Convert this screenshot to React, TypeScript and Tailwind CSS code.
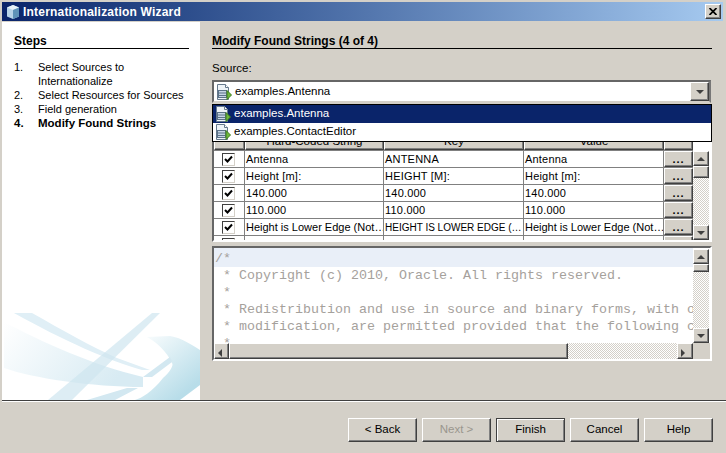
import React from "react";

const ui = { fontFamily: '"Liberation Sans", Arial, sans-serif' };

const FileIcon = () => (
  <svg width="16" height="16" viewBox="0 0 16 16" className="shrink-0">
    <path d="M1.5 0.5h8l3 3v12h-11z" fill="#eef3f7" stroke="#66798c" />
    <path d="M9.5 0.5v3h3" fill="#fff" stroke="#66798c" />
    <rect x="2.5" y="6.5" width="8" height="7" fill="#c7d5e4" stroke="#5b7288" />
    <path d="M3 9h7M3 11.5h7" stroke="#5b7288" />
    <path d="M11 6.5l4.5 4.5-4.5 4.5z" fill="#6cb83c" stroke="#3f7d1e" />
  </svg>
);

const Arrow = ({ dir }: { dir: "up" | "down" | "left" | "right" }) => {
  const pts = {
    up: "1,5 9,5 5,1",
    down: "1,1 9,1 5,5",
    left: "5,1 5,9 1,5",
    right: "1,1 1,9 5,5",
  }[dir];
  return (
    <svg width="10" height="10" viewBox="0 0 10 6" className="overflow-visible">
      <polygon points={pts} fill="#404040" />
    </svg>
  );
};

const raised =
  "border border-t-white border-l-white border-r-[#404040] border-b-[#404040] bg-[#d4d0c8] shadow-[inset_-1px_-1px_0_#808080]";
const checker =
  "bg-[repeating-conic-gradient(#d4d0c8_0_25%,#ffffff_0_50%)] bg-[length:2px_2px]";

const ScrollButton = ({ dir, className }: { dir: "up" | "down" | "left" | "right"; className: string }) => (
  <div className={`${raised} flex items-center justify-center ${className}`}>
    <Arrow dir={dir} />
  </div>
);

const rows = [
  ["Antenna", "ANTENNA", "Antenna"],
  ["Height [m]:", "HEIGHT [M]:", "Height [m]:"],
  ["140.000", "140.000", "140.000"],
  ["110.000", "110.000", "110.000"],
  ["Height is Lower Edge (Not…", "HEIGHT IS LOWER EDGE (…", "Height is Lower Edge (Not…"],
  ["", "", ""],
];

const cols = "grid grid-cols-[31px_139px_140px_140px_29px] grid-rows-[16px]";

const cellSize = (c: string) => {
  if (c.startsWith("HEIGHT IS")) return "text-[10px]";
  if (c.startsWith("Height is")) return "text-[11px]";
  return "text-[11px] tracking-[0.2px]";
};

const Row = ({ cells }: { cells: string[] }) => (
  <div className={`${cols} h-[17px] border-b border-[#808080] leading-[17px] text-black`}>
    <div className="flex items-center justify-center border-r border-[#808080] pr-[1px]">
      <div className="flex h-[13px] w-[13px] items-center justify-center border border-t-[#404040] border-l-[#404040] border-r-[#d4d0c8] border-b-[#d4d0c8] bg-white">
        <svg width="9" height="9" viewBox="0 0 9 9">
          <path d="M1 4l2.5 2.5L8 1.5" fill="none" stroke="#000" strokeWidth="2" />
        </svg>
      </div>
    </div>
    {cells.map((c, i) => (
      <div key={i} className={`overflow-hidden whitespace-nowrap border-r border-[#808080] pl-[1px] ${cellSize(c)}`}>
        {c}
      </div>
    ))}
    <div className={`${raised} text-center text-[11px] font-bold leading-[14px] tracking-[1px]`}>
      {cells[0] ? "..." : ""}
    </div>
  </div>
);

const Option = ({ label, active }: { label: string; active?: boolean }) => (
  <div className={`flex h-[18px] items-center gap-[3px] pl-[2px] text-[11.5px] ${active ? "bg-[#0a246a] text-white" : "bg-white text-black"}`}>
    <FileIcon />
    {label}
  </div>
);

const code = [
  "/*",
  " * Copyright (c) 2010, Oracle. All rights reserved.",
  " *",
  " * Redistribution and use in source and binary forms, with or without",
  " * modification, are permitted provided that the following conditions",
  " *",
];

const Swoosh = () => (
  <svg width="198" height="110" viewBox="0 0 198 110" className="mt-auto block shrink-0">
    <defs>
      <linearGradient id="sw1" x1="0" y1="0" x2="1" y2="0.4">
        <stop offset="0" stopColor="#ffffff" />
        <stop offset="1" stopColor="#d8ebf3" />
      </linearGradient>
      <linearGradient id="sw2" x1="0" y1="0" x2="0.75" y2="0.9">
        <stop offset="0" stopColor="#ffffff" />
        <stop offset="1" stopColor="#b8dde9" />
      </linearGradient>
    </defs>
    <path d="M12 23H30C60 40 90 57 115 68L148 80H140C110 72 60 50 12 23z" fill="#e0eff6" />
    <path d="M2 32C40 52 90 75 141 87V97C90 97 30 88 2 78z" fill="url(#sw1)" />
    <path d="M150 23H158L70 110H46z" fill="#cfe5ef" fillOpacity="0.7" />
    <path d="M145 47L168 46C180 48 190 55 198 60V95L178 110H133C140 108 150 102 161 88C168 82 172 75 170 73C168 68 160 55 145 47z" fill="url(#sw2)" />
    <path d="M85 110L125 98H136L113 110zM141 87L168 67L170 72L150 87z" fill="#d3e8f1" />
  </svg>
);

export default function App() {
  return (
    <div style={ui} className="h-[453px] w-[726px] overflow-hidden bg-[#d4d0c8] pt-[2px] pl-[2px] text-[11.5px] text-black">
      <div className="flex h-[19px] w-[721px] items-center bg-gradient-to-r from-[#0a246a] to-[#a6caf0] pl-[3px] pr-[2px]">
        <svg width="16" height="16" viewBox="0 0 16 16" className="shrink-0">
          <path d="M8 1l6 2.5v9L8 15l-6-2.5v-9z" fill="#b8d4e8" />
          <path d="M8 1l6 2.5L8 6 2 3.5z" fill="#e8f2f8" />
          <path d="M8 6l6-2.5v9L8 15z" fill="#5f93b8" />
        </svg>
        <span className="ml-[2px] text-[12px] font-bold tracking-[0.2px] text-white">Internationalization Wizard</span>
        <div className={`${raised} ml-auto flex h-[15px] w-[16px] items-center justify-center`}>
          <svg width="8" height="7" viewBox="0 0 8 7">
            <path d="M0.5 0l7 7M7.5 0l-7 7" stroke="#000" strokeWidth="1.7" />
          </svg>
        </div>
      </div>

      <div className="mt-[1px] flex h-[378px] w-[724px]">
        <aside className="flex w-[198px] shrink-0 flex-col bg-white">
          <div className="ml-[12px] mr-[11px] mt-[12px] border-b border-black text-[12px] font-bold leading-[14px]">Steps</div>
          <ol className="ml-[12px] mt-[11px] text-[11px] leading-[14px]">
            {[
              ["1.", "Select Sources to Internationalize"],
              ["2.", "Select Resources for Sources"],
              ["3.", "Field generation"],
              ["4.", "Modify Found Strings"],
            ].map(([n, t], i) => (
              <li key={n} className={`flex ${i === 3 ? "text-[11.5px] font-bold" : ""}`}>
                <span className="w-[24px] shrink-0">{n}</span>
                <span className={i === 0 ? "w-[120px]" : "whitespace-nowrap"}>{t}</span>
              </li>
            ))}
          </ol>
          <Swoosh />
        </aside>

        <main className="relative flex-1 pl-[12px]">
          <div className="mt-[12px] w-[500px] border-b border-black text-[12px] font-bold leading-[14px]">Modify Found Strings (4 of 4)</div>
          <div className="mt-[12px] h-[14px] leading-[14px]">Source:</div>
          <div className="mt-[5px] flex h-[23px] w-[499px] items-center gap-[3px] border-2 border-t-[#666] border-l-[#666] border-r-[#777] border-b-[#d4d0c8] bg-white pl-[2px]">
            <FileIcon />
            <span>examples.Antenna</span>
            <ScrollButton dir="down" className="ml-auto h-[19px] w-[19px]" />
          </div>

          {/* table */}
          <div className="mt-[28px] flex h-[111px] w-[500px] border-2 border-t-[#666] border-l-[#666] border-r-white border-b-white bg-white">
            <div className="w-[479px] shrink-0 overflow-hidden">
              <div className="grid h-[18px] grid-cols-[31px_139px_140px_140px_29px] border-b border-[#808080] text-center leading-[15px]">
                {["", "Hard-Coded String", "Key", "Value", ""].map((h, i) => (
                  <div key={i} className={raised}>{h}</div>
                ))}
              </div>
              {rows.map((r, i) => (
                <Row key={i} cells={r} />
              ))}
            </div>
            <div className="mt-[18px] flex w-[16px] shrink-0 flex-col">
              <ScrollButton dir="up" className="h-[15px]" />
              <div className={`${raised} h-[12px]`} />
              <div className={`${checker} flex-1`} />
              <ScrollButton dir="down" className="h-[15px]" />
            </div>
          </div>

          {/* source preview */}
          <div className="mt-[4px] flex h-[115px] w-[500px] flex-col border-2 border-t-[#666] border-l-[#666] border-r-white border-b-white bg-white">
            <div className="flex min-h-0 flex-1">
              <div className="w-[479px] shrink-0 overflow-hidden whitespace-pre bg-white font-['Liberation_Mono',monospace] text-[13.33px] leading-[17px] text-[#a5a19c]">
                {code.map((l, i) => (
                  <div key={i} className={`pl-[1px] ${i === 0 ? "bg-[#e9eff8] pt-[2px]" : ""}`}>{l}</div>
                ))}
              </div>
              <div className="mt-[1px] flex w-[16px] shrink-0 flex-col">
                <ScrollButton dir="up" className="h-[15px]" />
                <div className={`${raised} h-[8px]`} />
                <div className={`${checker} flex-1`} />
                <ScrollButton dir="down" className="h-[15px]" />
              </div>
            </div>
            <div className="flex h-[16px] shrink-0">
              <ScrollButton dir="left" className="w-[15px]" />
              <div className={`${raised} w-[339px]`} />
              <div className={`${checker} flex-1`} />
              <ScrollButton dir="right" className="w-[16px]" />
              <div className="w-[17px] bg-[#d4d0c8]" />
            </div>
          </div>

          {/* open combo list, drawn over the table */}
          <div className="absolute left-[12px] top-[82px] w-[500px] border border-black bg-white">
            <Option label="examples.Antenna" active />
            <Option label="examples.ContactEditor" />
          </div>
        </main>
      </div>

      <div className="h-[2px] w-[724px] border-t border-b border-t-[#404040] border-b-white" />

      <div className="mt-[16px] flex w-[711px] justify-end gap-[5px] text-[11.5px]">
        {["< Back", "Next >", "Finish", "Cancel", "Help"].map((b) => (
          <button
            key={b}
            className={`h-[24px] w-[69px] ${b === "Next >" ? "text-[#9a968e]" : ""} ${b === "Finish" ? "border border-[#404040] bg-[#d4d0c8] shadow-[inset_1px_1px_0_#fff,inset_-1px_-1px_0_#808080]" : raised}`}
          >
            {b}
          </button>
        ))}
      </div>
    </div>
  );
}
